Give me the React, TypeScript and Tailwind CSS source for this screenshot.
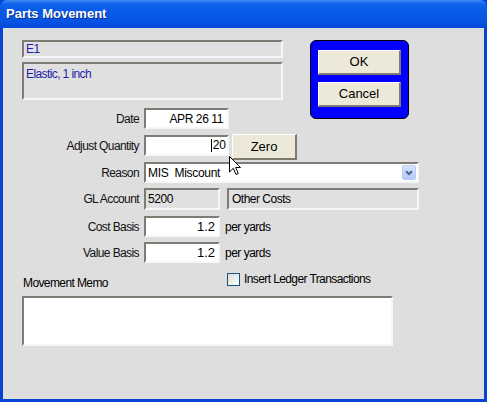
import React from "react";

const sunken =
  "border-2 border-t-[#7c7c74] border-l-[#7c7c74] border-b-[#f7f7f7] border-r-[#f7f7f7]";
const btn =
  "bg-[#ece9d8] border-t border-l border-b-2 border-r-2 border-t-white border-l-white border-b-[#7d7b70] border-r-[#7d7b70] flex items-center justify-center text-[13px] text-black";

function Label({ children }: { children: React.ReactNode }) {
  return (
    <div className="w-[117px] h-[21px] flex items-center justify-end text-[12px] tracking-[-0.6px] text-[#111]">
      {children}
    </div>
  );
}

export default function App() {
  return (
    <div className="w-[487px] h-[402px] flex flex-col bg-[#0843d6] font-['Liberation_Sans',Arial,sans-serif] overflow-hidden">
      <div className="h-[28px] rounded-t-[7px] bg-[linear-gradient(to_bottom,#3f8cf3_0%,#1468ee_12%,#0a5de8_30%,#0756e4_70%,#0548d8_100%)] flex items-center pl-[6px]">
        <span className="text-white font-bold text-[13px] [text-shadow:1px_1px_0_#0a2a8a]">
          Parts Movement
        </span>
      </div>
      <div className="flex-1 mx-[3px] mb-[3px] bg-[#dedede] relative pt-[12px] pl-[19px] text-[12px]">
        <div className="flex items-start">
          <div className="w-[261px] flex flex-col">
            <div className={`${sunken} h-[18px] bg-[#e0e0e0] flex items-center pl-[2px] text-[#1d1da8] tracking-[-0.6px]`}>
              E1
            </div>
            <div className={`${sunken} mt-[4px] h-[38px] bg-[#e0e0e0] pl-[2px] pt-[1px] text-[#1d1da8] tracking-[-0.6px]`}>
              Elastic, 1 inch
            </div>
            <div className="mt-[8px] flex items-center">
              <Label>Date</Label>
              <div className={`${sunken} ml-[5px] w-[85px] h-[21px] bg-white flex items-center justify-end pr-[4px] tracking-[-0.4px]`}>
                APR 26 11
              </div>
            </div>
          </div>
          <div className="ml-[27px] w-[99px] h-[79px] rounded-[6px] border border-black bg-[#0000fc] flex flex-col items-center pt-[9px]">
            <div className={`${btn} w-[83px] h-[25px]`}>OK</div>
            <div className={`${btn} w-[83px] h-[25px] mt-[7px]`}>Cancel</div>
          </div>
        </div>

        <div className="mt-[6px] h-[21px] flex items-start">
          <Label>Adjust Quantity</Label>
          <div className={`${sunken} ml-[5px] w-[85px] h-[21px] bg-white flex items-center justify-end pr-[1px]`}>
            <span className="border-l border-black leading-[13px] pl-[1px]">20</span>
          </div>
          <div className={`${btn} ml-[3px] -mt-[1px] w-[65px] h-[26px]`}>Zero</div>
        </div>

        <div className="mt-[6px] flex items-center">
          <Label>Reason</Label>
          <div className={`${sunken} ml-[5px] w-[275px] h-[21px] bg-white flex items-center justify-between pl-[2px] pr-[1px]`}>
            <span className="whitespace-pre tracking-[-0.3px]">MIS  Miscount</span>
            <div className="w-[14px] h-[15px] rounded-[2px] bg-[linear-gradient(to_bottom,#d6e3fd,#b4c9f7)] border border-[#b8cdf5] flex items-center justify-center">
              <svg width="8" height="6" viewBox="0 0 8 6">
                <path d="M1 1.2 L4 4.2 L7 1.2" stroke="#4d6185" strokeWidth="2" fill="none" />
              </svg>
            </div>
          </div>
        </div>

        <div className="mt-[5px] flex items-center">
          <Label>GL Account</Label>
          <div className={`${sunken} ml-[5px] w-[76px] h-[22px] bg-[#e0e0e0] flex items-center pl-[2px] tracking-[-0.4px]`}>
            5200
          </div>
          <div className={`${sunken} ml-[7px] w-[192px] h-[22px] bg-[#e0e0e0] flex items-center pl-[3px] tracking-[-0.5px]`}>
            Other Costs
          </div>
        </div>

        <div className="mt-[6px] flex items-center">
          <Label>Cost Basis</Label>
          <div className={`${sunken} ml-[5px] w-[76px] h-[21px] bg-white flex items-center justify-end pr-[3px] text-[13px]`}>
            1.2
          </div>
          <span className="ml-[5px] tracking-[-0.5px]">per yards</span>
        </div>

        <div className="mt-[5px] flex items-center">
          <Label>Value Basis</Label>
          <div className={`${sunken} ml-[5px] w-[76px] h-[21px] bg-white flex items-center justify-end pr-[3px] text-[13px]`}>
            1.2
          </div>
          <span className="ml-[5px] tracking-[-0.5px]">per yards</span>
        </div>

        <div className="mt-[10px] flex items-start leading-[14px]">
          <div className="w-[205px] pl-[1px] pt-[3px] tracking-[-0.6px]">Movement Memo</div>
          <div className="w-[13px] h-[13px] border border-[#1c5180] bg-[linear-gradient(135deg,#dcdcd7,#ffffff)]" />
          <div className="ml-[4px] -mt-[1px] tracking-[-0.6px]">Insert Ledger Transactions</div>
        </div>

        <div className={`${sunken} mt-[6px] w-[371px] h-[50px] bg-white`} />

        <svg
          className="absolute left-[226px] top-[128px]"
          width="13"
          height="20"
          viewBox="0 0 13 20"
        >
          <path
            d="M0.5 0.5 L0.5 16 L4.3 12.3 L7 18.5 L9.3 17.5 L6.7 11.5 L11.5 11.5 Z"
            fill="white"
            stroke="black"
            strokeWidth="1"
          />
        </svg>
      </div>
    </div>
  );
}
